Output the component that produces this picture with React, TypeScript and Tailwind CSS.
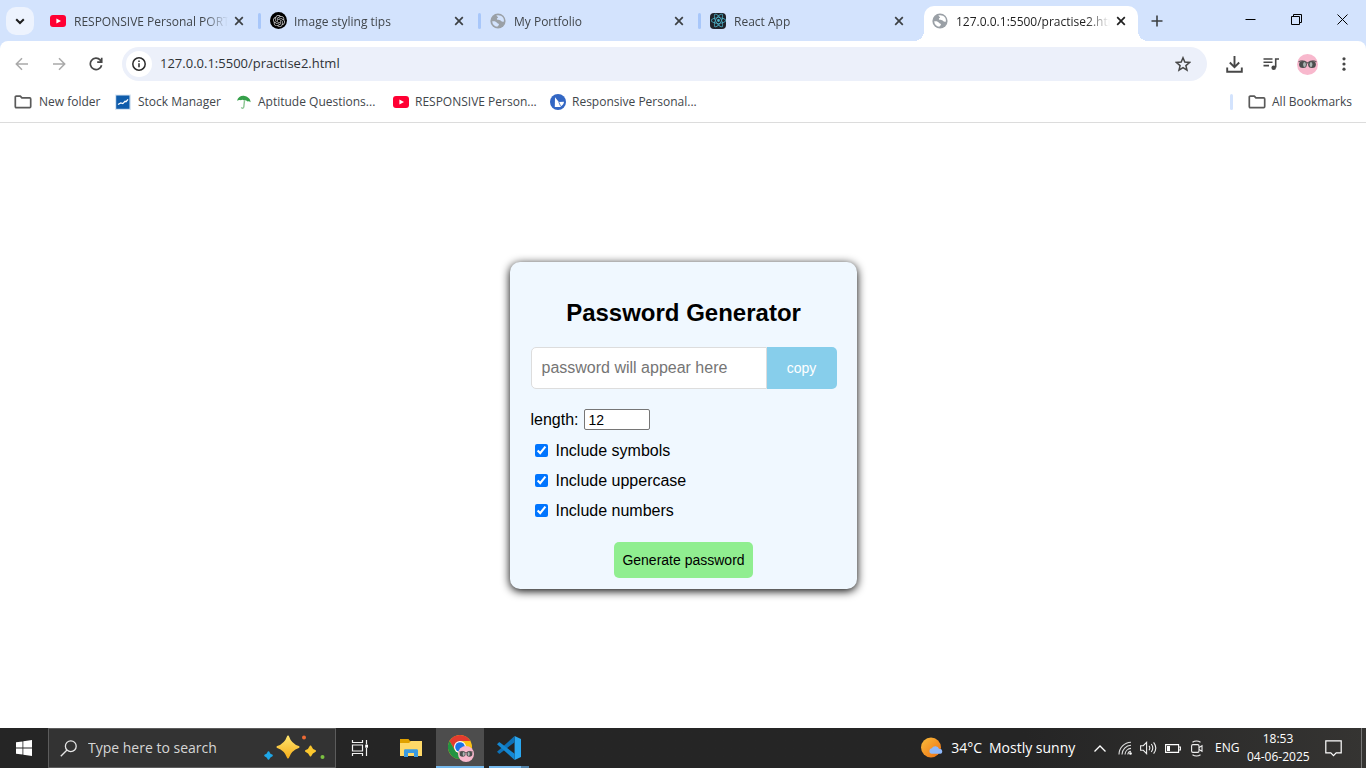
import React, { useState } from "react";
import { SiOpenai, SiReact } from "react-icons/si";

function YoutubeIcon() {
  return (
    <svg width="16" height="16" viewBox="0 0 16 16" className="shrink-0" aria-hidden="true">
      <rect x="0" y="2" width="16" height="12" rx="3" fill="#ff0033" />
      <path d="M6.4 5.4 11 8l-4.600 2.600z" fill="#fff" />
    </svg>
  );
}

function GlobeIcon({ land }: { land: string }) {
  return (
    <svg width="16" height="16" viewBox="0 0 16 16" className="shrink-0" aria-hidden="true">
      <circle cx="8" cy="8" r="7.600" fill="#9aa0a6" />
      <path d="M2.200 8.300c2.200-.4 4 .1 4.800 1.500.5 1 1.600.5 1.900 1.400.3 1-.9 1.300-1.600 2.600C4.500 13.500 2.300 11.500 2.200 8.300z" fill={land} />
      <path d="M6.300 2.500c2.300-.9 5.200-.1 6.700 2 .9 1.400 1 2.800.9 4-1.300.5-2.300.1-3-.8-.9-.9-2.400-.3-3.400-.9-1.200-.7-.5-1.700.5-2 .8-.3-.9-1.100-1.700-2.300z" fill={land} />
    </svg>
  );
}

function OpenAiIcon() {
  return (
    <span className="-mr-px grid size-[17px] shrink-0 place-items-center rounded-full bg-black">
      <SiOpenai size={12} color="#c4c4c4" aria-hidden="true" />
    </span>
  );
}

function ReactTabIcon() {
  return (
    <span className="grid size-4 shrink-0 place-items-center rounded-sm bg-[#20232a]">
      <SiReact size={15} color="#4fb8cf" aria-hidden="true" />
    </span>
  );
}

function FolderIcon() {
  return (
    <svg width="18" height="14" viewBox="0 0 18 14" className="shrink-0" fill="none" stroke="#5a5a5a" strokeWidth="1.700" strokeLinejoin="round" aria-hidden="true">
      <path d="M2.300 1.200h4l1.600 1.700h7.800c.6 0 1 .4 1 1v7.700c0 .6-.4 1-1 1H2.300c-.6 0-1-.4-1-1V2.200c0-.6.4-1 1-1z" />
    </svg>
  );
}

function StockIcon() {
  return (
    <svg width="16" height="16" viewBox="0 0 16 16" className="shrink-0" aria-hidden="true">
      <rect x="0" y=".5" width="16" height="15.500" fill="#d9e6f3" />
      <rect x="1.200" y="1.500" width="13.300" height="13.300" fill="#0f5cab" />
      <path d="M3 10.500l2.800-1.600 2 .7 2.200-2.400 1 .5 2-2.400" fill="none" stroke="#fff" strokeWidth="1.300" />
    </svg>
  );
}

function UmbrellaIcon() {
  return (
    <svg width="16" height="16" viewBox="0 0 16 16" className="shrink-0" aria-hidden="true">
      <path d="M1 6.800C2 3.200 5.300 1.300 8.600 2c3.400.6 6 3.100 6 6.300-1-1-2-1.300-3.200-.9-.9-1-2-1.400-3.100-1-1.200-.9-2.400-1-3.600-.2C3.500 5.600 2.200 5.900 1 6.800z" fill="#35a04a" />
      <path d="M8.500 6.400 7.800 13c-.2 1.600-2.200 1.600-2.300.2" fill="none" stroke="#8cc592" strokeWidth="1.400" />
    </svg>
  );
}

function BlueBadgeIcon() {
  return (
    <svg width="16" height="16" viewBox="0 0 16 16" className="shrink-0" aria-hidden="true">
      <circle cx="8" cy="8" r="8" fill="#3367c4" />
      <path d="M5 3.200 8.800 8.100 14 7.800c-.2 2-.9 2.700-2 3.600-1 .9-1.600 1.600-3 1.500H4.800z" fill="#fff" />
      <path d="M8.800 8.100 10.500 12" stroke="#3367c4" strokeWidth=".8" />
    </svg>
  );
}

function CloseIcon({ color }: { color: string }) {
  return (
    <svg width="10" height="10" viewBox="0 0 10 10" stroke={color} strokeWidth="1.700" aria-hidden="true">
      <path d="M1.200 1.200l7.600 7.600M8.800 1.200 1.200 8.800" />
    </svg>
  );
}

function Avatar({ size }: { size: number }) {
  return (
    <svg width={size} height={size} viewBox="0 0 21 21" aria-hidden="true">
      <circle cx="10.500" cy="10.500" r="10.500" fill="#f8b8cd" />
      <path d="M1.500 8c2.500-1.500 6-1.200 9 1 3-2.200 6.500-2.500 9-1" fill="none" stroke="#6d6064" strokeWidth="1.200" />
      <ellipse cx="6" cy="10.500" rx="3.900" ry="3.500" fill="#4b4e4e" />
      <ellipse cx="15" cy="10.500" rx="3.900" ry="3.500" fill="#4b4e4e" />
      <ellipse cx="7.500" cy="10.500" rx="1.400" ry="2.500" fill="#aab4b2" />
      <ellipse cx="14" cy="10.500" rx="1.400" ry="2.500" fill="#aab4b2" />
    </svg>
  );
}

const tabs = [
  { title: "RESPONSIVE Personal PORT", icon: <YoutubeIcon />, divider: true },
  { title: "Image styling tips", icon: <OpenAiIcon />, divider: true },
  { title: "My Portfolio", icon: <GlobeIcon land="#d3e3fd" />, divider: true },
  { title: "React App", icon: <ReactTabIcon />, divider: false },
];

const fade = "[mask-image:linear-gradient(to_right,black_130px,transparent_154px)]";

function TabStrip() {
  return (
    <header className="flex h-[41px] items-start bg-[#d3e3fd] pl-1.5 text-xs text-[#41464b]">
      <button type="button" aria-label="Search tabs" className="mt-[7px] mr-[7px] grid size-7 shrink-0 place-items-center rounded-[10px] bg-[#edf3fe]">
        <svg width="10" height="7" viewBox="0 0 10 7" fill="none" stroke="#1f1f1f" strokeWidth="2" aria-hidden="true">
          <path d="M1.200 1.200 5 5l3.800-3.800" />
        </svg>
      </button>
      <nav aria-label="Open tabs" className="flex h-[41px] min-w-0 flex-1">
        {tabs.map((tab) => (
          <div key={tab.title} className="flex h-[41px] max-w-[220px] min-w-0 flex-1 items-center pl-[9px]">
            {tab.icon}
            <a href="#" className={`mt-0.5 ml-2 min-w-0 flex-1 overflow-hidden whitespace-nowrap ${fade}`}>{tab.title}</a>
            <button type="button" aria-label={`Close ${tab.title}`} className="mr-3.5 ml-1"><CloseIcon color="#3c4043" /></button>
            <span className={tab.divider ? "h-4 w-[3px] rounded-sm bg-[#a8c7fa]" : "h-4 w-[3px]"} />
          </div>
        ))}
        <div className="relative ml-[3px] flex h-[35px] max-w-[214px] min-w-0 flex-1 items-center self-end rounded-t-[10px] bg-white pr-3 pb-[5px] pl-2 text-[#1f1f1f]">
          <span className="absolute bottom-0 -left-2.5 size-2.5 bg-[radial-gradient(circle_at_0_0,#d3e3fd_10px,white_10px)]" />
          <span className="absolute -right-2.5 bottom-0 size-2.5 bg-[radial-gradient(circle_at_100%_0,#d3e3fd_10px,white_10px)]" />
          <GlobeIcon land="#ffffff" />
          <a href="#" aria-current="page" className={`mt-0.5 ml-2 min-w-0 flex-1 overflow-hidden whitespace-nowrap ${fade}`}>127.0.0.1:5500/practise2.htm</a>
          <button type="button" aria-label="Close tab" className="ml-1"><CloseIcon color="#1f1f1f" /></button>
        </div>
        <button type="button" aria-label="New tab" className="ml-[13px] grid h-[41px] w-3 place-items-center">
          <svg width="12" height="12" viewBox="0 0 12 12" stroke="#3c4043" strokeWidth="1.600" aria-hidden="true"><path d="M6 .5v11M.5 6h11" /></svg>
        </button>
      </nav>
      <div className="flex h-[39px] shrink-0 text-black">
        <button type="button" aria-label="Minimize" className="grid w-[47px] place-items-center">
          <svg width="11" height="11" viewBox="0 0 11 11" stroke="currentColor" aria-hidden="true"><path d="M.5 5.500h10" /></svg>
        </button>
        <button type="button" aria-label="Restore" className="grid w-[44px] place-items-center">
          <svg width="11" height="11" viewBox="0 0 11 11" fill="none" stroke="currentColor" strokeWidth="1" aria-hidden="true"><path d="M.5 2.500h8v8h-8zM2.500 2.500v-2h8v8h-2" /></svg>
        </button>
        <button type="button" aria-label="Close window" className="grid w-[48px] place-items-center">
          <svg width="11" height="11" viewBox="0 0 11 11" stroke="currentColor" aria-hidden="true"><path d="M.5.500l10 10M10.500.500l-10 10" /></svg>
        </button>
      </div>
    </header>
  );
}

function Toolbar() {
  return (
    <div className="bg-[#d3e3fd]">
      <div className="flex h-[47px] items-center rounded-t-lg bg-white px-3.5 pb-px">
        <button type="button" aria-label="Back" className="grid w-4 place-items-center">
          <svg width="14" height="14" viewBox="0 0 14 14" fill="none" stroke="#a9a9a9" strokeWidth="1.500" aria-hidden="true"><path d="M13 7H1.500M7 1.200 1.300 7 7 12.800" /></svg>
        </button>
        <button type="button" aria-label="Forward" className="ml-[21px] grid w-4 place-items-center">
          <svg width="14" height="14" viewBox="0 0 14 14" fill="none" stroke="#a9a9a9" strokeWidth="1.500" aria-hidden="true"><path d="M1 7h11.500M7 1.200 12.700 7 7 12.800" /></svg>
        </button>
        <button type="button" aria-label="Reload" className="ml-[21px] grid w-4 place-items-center">
          <svg width="14" height="14" viewBox="0 0 14 14" fill="none" stroke="#474747" strokeWidth="1.700" aria-hidden="true"><path d="M12.600 8.200A5.700 5.700 0 1 1 11.300 3.100L12.700 4.800M12.700.7v4.400H8.200" /></svg>
        </button>
        <div className="ml-[18px] flex h-[34px] min-w-0 flex-1 items-center rounded-full bg-[#ecf0fa] pr-4 pl-1">
          <button type="button" aria-label="View site information" className="grid size-[26px] shrink-0 place-items-center rounded-full bg-white">
            <svg width="14" height="14" viewBox="0 0 14 14" fill="none" stroke="#2b2b2b" strokeWidth="1.500" aria-hidden="true"><circle cx="7" cy="7" r="6.200" /><path d="M7 6.200v4M7 3.500v1.500" /></svg>
          </button>
          <input aria-label="Address" readOnly value="127.0.0.1:5500/practise2.html" className="ml-2 min-w-0 flex-1 bg-transparent text-[13px] text-[#2f3337] outline-none" />
          <button type="button" aria-label="Bookmark this page">
            <svg width="16" height="16" viewBox="0 0 16 16" fill="none" stroke="#474747" strokeWidth="1.500" aria-hidden="true"><path d="M8 1.800l1.800 4.300 4.700.4-3.600 3.100 1.100 4.600-4-2.500-4 2.500 1.100-4.600L1.500 6.500l4.700-.4z" /></svg>
          </button>
        </div>
        <div className="ml-[19px] flex shrink-0 items-center">
          <button type="button" aria-label="Downloads">
            <svg width="17" height="17" viewBox="0 0 17 17" fill="none" stroke="#474747" strokeWidth="1.900" aria-hidden="true"><path d="M8.500 0v11M3.800 6.500l4.700 4.700 4.700-4.700M1.200 11.500v4.300h14.600v-4.300" /></svg>
          </button>
          <button type="button" aria-label="Media controls" className="ml-5">
            <svg width="17" height="16" viewBox="0 0 17 16" fill="none" stroke="#474747" strokeWidth="1.600" aria-hidden="true"><path d="M.5 3h9M.5 6.300h9M.5 9.600h5.500M12.700 11.500V3H16" /><circle cx="10.700" cy="11.700" r="2.300" fill="#474747" stroke="none" /></svg>
          </button>
          <button type="button" aria-label="Profile" className="ml-[17px]"><Avatar size={21} /></button>
          <button type="button" aria-label="Menu" className="ml-[18px] grid w-4 place-items-center">
            <svg width="4" height="14" viewBox="0 0 4 14" fill="#474747" aria-hidden="true"><circle cx="2" cy="1.800" r="1.600" /><circle cx="2" cy="7" r="1.600" /><circle cx="2" cy="12.200" r="1.600" /></svg>
          </button>
        </div>
      </div>
    </div>
  );
}

function Bookmarks() {
  return (
    <nav aria-label="Bookmarks" className="flex h-[35px] items-center border-b border-[#dcdcdc] px-3.5 pb-1.5 text-xs whitespace-nowrap text-[#41464b]">
      <a href="#" className="flex w-[101px] items-center gap-[7px]"><FolderIcon />New folder</a>
      <a href="#" className="flex w-[121px] items-center gap-[7px]"><StockIcon />Stock Manager</a>
      <a href="#" className="flex w-[157px] items-center gap-1.5"><UmbrellaIcon />Aptitude Questions...</a>
      <a href="#" className="flex w-[157px] items-center gap-1.5"><YoutubeIcon />RESPONSIVE Person...</a>
      <a href="#" className="flex items-center gap-1.5"><BlueBadgeIcon />Responsive Personal...</a>
      <span className="ml-auto h-4 w-[3px] rounded-sm bg-[#d3e3fd]" />
      <a href="#" className="ml-[15px] flex items-center gap-1.5"><FolderIcon />All Bookmarks</a>
    </nav>
  );
}

const LOWER = "abcdefghijklmnopqrstuvwxyz";

function PasswordCard() {
  const [password, setPassword] = useState("");
  const [length, setLength] = useState(12);
  const [options, setOptions] = useState({ symbols: true, uppercase: true, numbers: true });

  function generate() {
    const chars =
      LOWER +
      (options.symbols ? "!@#$%^&*()_+-=" : "") +
      (options.uppercase ? LOWER.toUpperCase() : "") +
      (options.numbers ? "0123456789" : "");
    setPassword(Array.from({ length }, () => chars[Math.floor(Math.random() * chars.length)]).join(""));
  }

  const keys = ["symbols", "uppercase", "numbers"] as const;

  return (
    <section className="w-[347px] rounded-[10px] bg-[#f0f8ff] pt-9 pr-5 pb-[11px] pl-[21px] font-['Liberation_Sans',Arial,sans-serif] text-base text-black shadow-[0_2px_10px_black]">
      <h2 className="text-center text-2xl leading-[30px] font-bold">Password Generator</h2>
      <div className="mt-[19px] flex h-[42px]">
        <input aria-label="Generated password" readOnly value={password} placeholder="password will appear here" className="min-w-0 flex-1 rounded-l-[5px] border border-[#dddddd] bg-white px-2.5 outline-none placeholder:text-[#757575]" />
        <button type="button" onClick={() => navigator.clipboard?.writeText(password)} className="w-[70px] rounded-r-[5px] bg-[#87ceeb] text-sm text-white">copy</button>
      </div>
      <div className="mt-5 flex h-[21px] items-center gap-[5px]">
        <label htmlFor="length" className="leading-5">length:</label>
        <input id="length" type="number" min={4} max={40} value={length} onChange={(e) => setLength(Number(e.target.value))} className="h-[21px] w-[66px] rounded-xs border border-[#767676] bg-white px-1 text-sm outline-none" />
      </div>
      <div className="mt-1.5 flex flex-col">
        {keys.map((key) => (
          <label key={key} className="flex h-[30px] items-center gap-2 pl-1">
            <input type="checkbox" checked={options[key]} onChange={() => setOptions({ ...options, [key]: !options[key] })} className="mb-0.5 size-[13px] accent-[#0075ff]" />
            Include {key}
          </label>
        ))}
      </div>
      <button type="button" onClick={generate} className="mx-auto mt-4 block h-9 w-[139px] rounded-[5px] bg-[#90ee90] text-sm">Generate password</button>
    </section>
  );
}

function Star({ cx, cy, r, fill }: { cx: number; cy: number; r: number; fill: string }) {
  const k = r * 0.25;
  return (
    <path
      d={`M${cx} ${cy - r}Q${cx + k} ${cy - k} ${cx + r} ${cy}Q${cx + k} ${cy + k} ${cx} ${cy + r}Q${cx - k} ${cy + k} ${cx - r} ${cy}Q${cx - k} ${cy - k} ${cx} ${cy - r}Z`}
      fill={fill}
      stroke={fill}
      strokeWidth="2"
      strokeLinejoin="round"
    />
  );
}

function Taskbar() {
  return (
    <footer className="flex h-10 items-stretch bg-linear-to-r from-[#252525] from-75% to-[#353432] text-xs whitespace-nowrap text-white">
      <button type="button" aria-label="Start" className="grid w-12 shrink-0 place-items-center">
        <svg width="16" height="16" viewBox="0 0 16 16" fill="#fff" aria-hidden="true"><path d="M0 2.300 6.500 1.400v6.200H0zM7.300 1.300 16 0v7.600H7.300zM0 8.400h6.500v6.200L0 13.700zM7.300 8.400H16V16l-8.700-1.300z" /></svg>
      </button>
      <label className="flex w-72 items-center border border-[#5c5c5c] bg-[#333333] pr-[9px] pl-[11px]">
        <svg width="17" height="17" viewBox="0 0 17 17" fill="none" stroke="#e6e6e6" strokeWidth="1.300" aria-hidden="true"><circle cx="10.800" cy="6.200" r="5.400" /><path d="M7 10 .8 16.300" /></svg>
        <input type="search" aria-label="Search" placeholder="Type here to search" className="ml-[11px] min-w-0 flex-1 bg-transparent text-sm outline-none placeholder:text-[#d6d6d6]" />
        <svg width="62" height="26" viewBox="0 0 62 26" className="shrink-0" aria-hidden="true">
          <defs>
            <linearGradient id="gold" x1="0" y1="0" x2="0" y2="1"><stop stopColor="#ffe36b" /><stop offset="1" stopColor="#f5b01d" /></linearGradient>
          </defs>
          <Star cx={24} cy={12} r={10.500} fill="url(#gold)" />
          <Star cx={46.500} cy={16} r={4.500} fill="#fbc72e" />
          <Star cx={4.500} cy={20.500} r={3.300} fill="#1ea7e8" />
          <circle cx="40" cy="2.500" r="2" fill="#ee6a35" />
          <circle cx="58.500" cy="22" r="2" fill="#7cc142" />
        </svg>
      </label>
      <button type="button" aria-label="Task view" className="grid w-12 shrink-0 place-items-center">
        <svg width="18" height="16" viewBox="0 0 18 16" fill="none" stroke="#f2f2f2" strokeWidth="1.200" aria-hidden="true"><path d="M1.500 0v2.500h10V0M1.500 5h10v6h-10zM1.500 16v-2.500h10V16M15.500 0v4.500M15.500 8v8" /><path d="M14.200 4.700H17v3h-2.800z" fill="#fff" stroke="none" /></svg>
      </button>
      <button type="button" aria-label="File Explorer" className="ml-[3px] grid w-12 shrink-0 place-items-center">
        <svg width="22" height="18" viewBox="0 0 22 18" aria-hidden="true"><path d="M0 0h8.500l1.500 2h11v15H0z" fill="#e0a100" /><path d="M0 4h9l2-2h11v15H0z" fill="#ffd968" /><path d="M4 18v-6.500a1.300 1.300 0 0 1 1.300-1.300h11.400a1.300 1.300 0 0 1 1.300 1.300V18h-4v-4H8v4z" fill="#3a9ae0" /></svg>
      </button>
      <button type="button" aria-label="Google Chrome" className="relative ml-px grid w-12 shrink-0 place-items-center border-b-2 border-[#76b9ed] bg-[#4d4d4d]">
        <svg width="24" height="24" viewBox="0 0 24 24" aria-hidden="true"><circle cx="12" cy="12" r="12" fill="#fbc116" /><path d="M12 0a12 12 0 0 1 10.400 6H12L6.800 15 1.600 6A12 12 0 0 1 12 0z" fill="#e33b2e" /><path d="M1.600 6 6.800 15A6 6 0 0 0 12 18h5.200L12 24A12 12 0 0 1 1.600 6z" fill="#229342" /><circle cx="12" cy="12" r="6" fill="#fff" /><circle cx="12" cy="12" r="4.800" fill="#1a73e8" /></svg>
        <span className="absolute right-2.5 bottom-1"><Avatar size={16} /></span>
      </button>
      <button type="button" aria-label="Visual Studio Code" className="relative ml-px grid w-12 shrink-0 place-items-center">
        <svg width="24" height="24" viewBox="0 0 24 24" aria-hidden="true"><path d="M17.600 0 24 2.900v18.200L17.600 24z" fill="#2aa7f0" /><path d="M17.600 0 0 15.800l1.800 1.700c.4.300.8.300 1.200 0L17.600 6.300z" fill="#0e72b8" /><path d="M17.600 24 0 8.200l1.800-1.700c.4-.3.8-.3 1.200 0l14.600 11.200z" fill="#1488d3" /></svg>
        <span className="absolute bottom-0 left-1 flex h-0.5 w-10"><span className="w-8 bg-[#76b9ed]" /><span className="w-2 bg-[#5282a8]" /></span>
      </button>
      <div className="ml-auto flex shrink-0 items-center">
        <button type="button" className="flex items-center text-sm">
          <svg width="22" height="22" viewBox="0 0 22 22" aria-hidden="true">
            <defs><linearGradient id="sun" x1="0" y1="0" x2="1" y2="1"><stop stopColor="#f9bd3c" /><stop offset="1" stopColor="#ee6f12" /></linearGradient></defs>
            <circle cx="10" cy="10.500" r="10" fill="url(#sun)" />
            <path d="M10.500 16.800a2.800 2.800 0 0 1 .3-5.500 4 4 0 0 1 7.300.6 2.500 2.500 0 0 1 1.200 4.900z" fill="#8fb9fb" />
          </svg>
          <span className="ml-2">34°C</span>
          <span className="ml-[7px] w-[82px] text-left">Mostly sunny</span>
        </button>
        <button type="button" aria-label="Show hidden icons" className="ml-[23px]">
          <svg width="12" height="7" viewBox="0 0 12 7" fill="none" stroke="#fff" strokeWidth="1.300" aria-hidden="true"><path d="M.5 6.500 6 1l5.500 5.500" /></svg>
        </button>
        <button type="button" aria-label="Network" className="ml-3">
          <svg width="14" height="14" viewBox="0 0 14 14" fill="none" stroke="#dedede" strokeWidth="1.100" aria-hidden="true"><path d="M1 13.500A12.500 12.500 0 0 1 13 1.200M4 13.500A9.500 9.500 0 0 1 13 4.200M7 13.500A6.500 6.500 0 0 1 13 7.400M9.800 13.500a3.500 3.500 0 0 1 3.200-3.200" /><circle cx="12.500" cy="12.500" r="1.300" fill="#fff" stroke="none" /></svg>
        </button>
        <button type="button" aria-label="Volume" className="ml-2">
          <svg width="17" height="14" viewBox="0 0 17 14" fill="none" stroke="#eee" strokeWidth="1.100" aria-hidden="true"><path d="M.6 4.700h2.700L6.600 1.400v11.200L3.300 9.300H.6zM9 4.800q1.600 2.200 0 4.400M11.300 3q3 4 0 8M13.600 1.300q4.400 5.700 0 11.400" /></svg>
        </button>
        <button type="button" aria-label="Battery" className="ml-2">
          <svg width="16" height="9" viewBox="0 0 16 9" fill="none" stroke="#fff" strokeWidth="1.100" aria-hidden="true"><path d="M.6.600h13v7.800H.6zM14 3h1.400v3H14" /><path d="M2 2h3v5H2z" fill="#fff" stroke="none" /></svg>
        </button>
        <button type="button" aria-label="Meet now" className="ml-2.5">
          <svg width="12" height="17" viewBox="0 0 12 17" fill="none" stroke="#eee" strokeWidth="1.100" aria-hidden="true"><rect x=".6" y="4.600" width="7.400" height="7.800" rx="1.300" /><path d="M8 7.500l3-1.800v5.600L8 9.500M1.500 2.300q4-2.600 8 0M1.500 14.700q4 2.600 8 0" /></svg>
        </button>
        <button type="button" className="ml-3 w-6">ENG</button>
        <button type="button" className="ml-2 w-[62px] text-center leading-[18px]">18:53<br />04-06-2025</button>
        <button type="button" aria-label="Notifications" className="ml-4">
          <svg width="17" height="17" viewBox="0 0 17 17" fill="none" stroke="#fff" strokeWidth="1.200" aria-hidden="true"><path d="M.8.800h15.400v12h-5L8.500 15.700 5.800 12.800h-5z" /></svg>
        </button>
        <span className="mr-1 ml-[19px] h-10 w-px bg-[#777]" />
      </div>
    </footer>
  );
}

export default function App() {
  return (
    <div className="flex min-h-screen flex-col bg-white font-['Open_Sans','Noto_Sans',sans-serif]">
      <TabStrip />
      <Toolbar />
      <Bookmarks />
      <main className="flex flex-1 items-center justify-center">
        <PasswordCard />
      </main>
      <Taskbar />
    </div>
  );
}
